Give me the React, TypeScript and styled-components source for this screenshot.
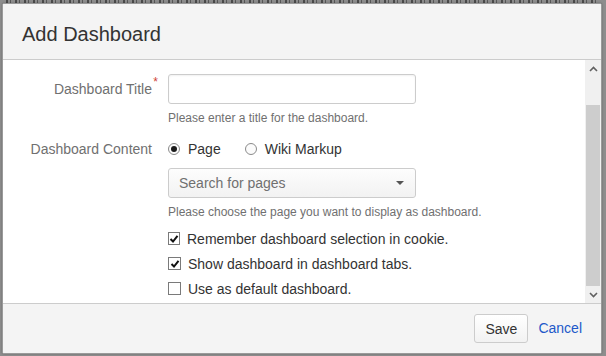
import React from 'react';
import styled, { createGlobalStyle } from 'styled-components';

const GlobalStyle = createGlobalStyle`
  html, body {
    margin: 0;
    padding: 0;
    background: #8d8d8d;
    overflow: hidden;
  }
  * {
    box-sizing: border-box;
  }
`;

const Backdrop = styled.div`
  position: relative;
  width: 606px;
  height: 356px;
  background: #8d8d8d;
  overflow: hidden;
  font-family: 'Liberation Sans', Arial, sans-serif;
`;

// bottom edge of the page text peeking out above the dialog
const PageStrip = styled.div`
  height: 3px;
  margin: 0 6px;
  background: repeating-linear-gradient(
    90deg,
    #3a3a3a 0 2px,
    #8d8d8d 2px 4px,
    #4a4a4a 4px 5px,
    #8d8d8d 5px 9px
  );
  opacity: 0.8;
`;

const Dialog = styled.div`
  position: absolute;
  left: 2px;
  top: 3px;
  width: 600px;
  height: 351px;
  display: flex;
  flex-direction: column;
  background: #fff;
  border: 1px solid #9a9a9a;
  border-radius: 2px;
  box-shadow: 0 0 2px rgba(0, 0, 0, 0.3);
  overflow: hidden;
`;

const Header = styled.div`
  height: 56px;
  padding: 18px 0 0 19px;
  background: #f4f4f4;
  border-bottom: 1px solid #cccccc;
`;

const Title = styled.h2`
  margin: 0;
  font-size: 20px;
  line-height: 24px;
  font-weight: normal;
  color: #333;
`;

const Body = styled.div`
  height: 243px;
  display: flex;
  background: #fff;
`;

const Content = styled.div`
  flex: 1;
  padding-top: 14px;
  overflow: hidden;
`;

const FormRow = styled.div<{ $top?: number }>`
  display: grid;
  grid-template-columns: 149px 248px;
  column-gap: 16px;
  align-items: start;
  margin-top: ${p => p.$top ?? 0}px;
`;

const Label = styled.label<{ $h: number }>`
  position: relative;
  height: ${p => p.$h}px;
  line-height: ${p => p.$h}px;
  text-align: right;
  font-size: 14px;
  color: #707070;
  white-space: nowrap;
`;

const Required = styled.span`
  position: absolute;
  right: -6px;
  top: -7px;
  font-size: 12px;
  color: #d04437;
`;

const Field = styled.div`
  display: flex;
  flex-direction: column;
`;

const TextInput = styled.input`
  width: 248px;
  height: 30px;
  border: 1px solid #cccccc;
  border-radius: 3px;
  box-shadow: inset 0 1px 2px rgba(0, 0, 0, 0.06);
  outline: none;
  font-family: inherit;
  font-size: 14px;
  padding: 0 8px;
`;

const Help = styled.div<{ $top: number }>`
  margin-top: ${p => p.$top}px;
  font-size: 12px;
  line-height: 15px;
  color: #707070;
  white-space: nowrap;
`;

const RadioRow = styled.div`
  height: 20px;
  display: flex;
  align-items: center;
  gap: 24px;
`;

const RadioItem = styled.span`
  display: flex;
  align-items: center;
  gap: 8px;
  font-size: 14px;
  color: #333;
  white-space: nowrap;
`;

const RadioDot = styled.span<{ $on?: boolean }>`
  position: relative;
  width: 12px;
  height: 12px;
  border-radius: 50%;
  border: 1px solid #8a8a8a;
  background: #fbfbfb;
  &::after {
    content: '';
    display: ${p => (p.$on ? 'block' : 'none')};
    position: absolute;
    left: 2px;
    top: 2px;
    width: 6px;
    height: 6px;
    border-radius: 50%;
    background: #1a1a1a;
  }
`;

const Select = styled.div`
  margin-top: 9px;
  width: 248px;
  height: 30px;
  display: flex;
  align-items: center;
  justify-content: space-between;
  padding: 0 11px 0 10px;
  border: 1px solid #cccccc;
  border-radius: 3px;
  background: linear-gradient(#fdfdfd, #f2f2f2);
  font-size: 14px;
  color: #707070;
`;

const Caret = styled.span`
  width: 0;
  height: 0;
  border-left: 4px solid transparent;
  border-right: 4px solid transparent;
  border-top: 4px solid #555;
`;

const Checks = styled.div`
  margin-top: 6px;
  display: flex;
  flex-direction: column;
`;

const CheckRow = styled.div`
  height: 25px;
  display: flex;
  align-items: center;
  gap: 7px;
  font-size: 14px;
  color: #333;
  white-space: nowrap;
`;

const Box = styled.span`
  width: 13px;
  height: 13px;
  border: 1px solid #7a7a7a;
  background: #fff;
  display: flex;
  align-items: center;
  justify-content: center;
`;

const Scrollbar = styled.div`
  width: 16px;
  display: flex;
  flex-direction: column;
  background: #f0f0f0;
`;

const Arrow = styled.div`
  height: 17px;
  display: flex;
  align-items: center;
  justify-content: center;
`;

const Track = styled.div`
  flex: 1;
  display: flex;
  flex-direction: column;
  justify-content: flex-end;
  padding: 0 1px;
`;

const Thumb = styled.div`
  height: 181px;
  background: #cdcdcd;
`;

const Footer = styled.div`
  flex: 1;
  display: flex;
  justify-content: flex-end;
  align-items: flex-start;
  gap: 10px;
  padding: 10px 19px 0 0;
  background: #f4f4f4;
  border-top: 1px solid #cccccc;
`;

const Button = styled.button`
  width: 54px;
  height: 29px;
  border: 1px solid #cccccc;
  border-radius: 3px;
  background: linear-gradient(#ffffff, #f2f2f2);
  font-family: inherit;
  font-size: 14px;
  color: #333;
  padding: 0;
`;

const LinkButton = styled.a`
  height: 29px;
  line-height: 29px;
  font-size: 14px;
  color: #2158c9;
  text-decoration: none;
`;

const Check = () => (
  <svg width="10" height="10" viewBox="0 0 10 10">
    <path d="M1.5 5 L4 7.5 L8.5 1.8" fill="none" stroke="#111" strokeWidth="2" />
  </svg>
);

const Chevron = ({ up }: { up?: boolean }) => (
  <svg width="9" height="6" viewBox="0 0 9 6">
    <path
      d={up ? 'M1 5 L4.5 1.5 L8 5' : 'M1 1 L4.5 4.5 L8 1'}
      fill="none"
      stroke="#606060"
      strokeWidth="1.6"
    />
  </svg>
);

const App: React.FC = () => {
  return (
    <>
      <GlobalStyle />
      <Backdrop>
        <PageStrip />
        <Dialog>
          <Header>
            <Title>Add Dashboard</Title>
          </Header>
          <Body>
            <Content>
              <FormRow>
                <Label $h={30}>
                  Dashboard Title<Required>*</Required>
                </Label>
                <Field>
                  <TextInput type="text" />
                  <Help $top={7}>Please enter a title for the dashboard.</Help>
                </Field>
              </FormRow>
              <FormRow $top={13}>
                <Label $h={20}>Dashboard Content</Label>
                <Field>
                  <RadioRow>
                    <RadioItem>
                      <RadioDot $on />
                      Page
                    </RadioItem>
                    <RadioItem>
                      <RadioDot />
                      Wiki Markup
                    </RadioItem>
                  </RadioRow>
                  <Select>
                    <span>Search for pages</span>
                    <Caret />
                  </Select>
                  <Help $top={7}>Please choose the page you want to display as dashboard.</Help>
                  <Checks>
                    <CheckRow>
                      <Box><Check /></Box>
                      Remember dashboard selection in cookie.
                    </CheckRow>
                    <CheckRow>
                      <Box><Check /></Box>
                      Show dashboard in dashboard tabs.
                    </CheckRow>
                    <CheckRow>
                      <Box />
                      Use as default dashboard.
                    </CheckRow>
                  </Checks>
                </Field>
              </FormRow>
            </Content>
            <Scrollbar>
              <Arrow><Chevron up /></Arrow>
              <Track><Thumb /></Track>
              <Arrow><Chevron /></Arrow>
            </Scrollbar>
          </Body>
          <Footer>
            <Button>Save</Button>
            <LinkButton href="#">Cancel</LinkButton>
          </Footer>
        </Dialog>
      </Backdrop>
    </>
  );
};

export default App;
